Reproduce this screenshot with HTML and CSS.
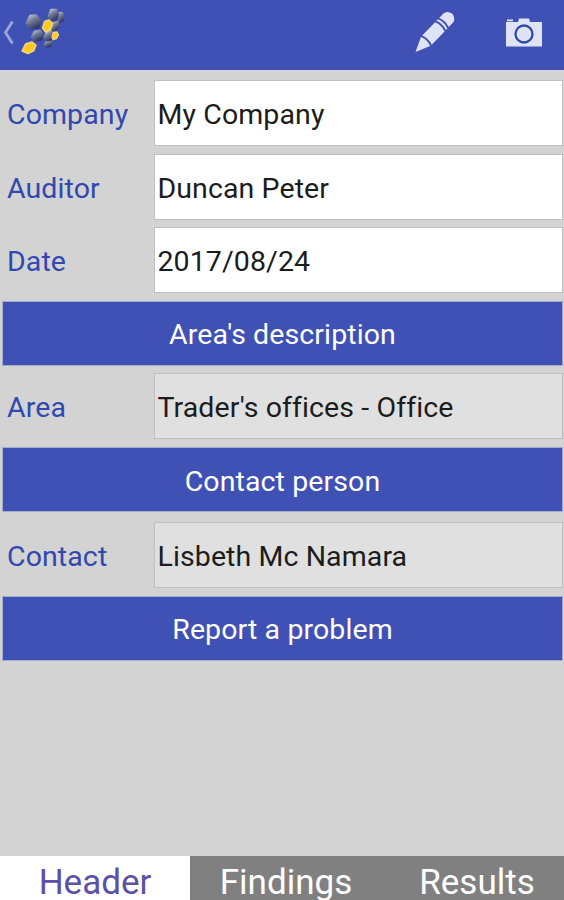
FILE: index.html
```html
<!DOCTYPE html>
<html lang="en">
<head>
  <meta charset="UTF-8">
  <meta name="viewport" content="width=device-width, initial-scale=1.0">
  <title>Audit</title>
  <link rel="stylesheet" href="styles.css">
</head>
<body>
  <div class="app">
    <header class="topbar">
      <svg class="back" width="12" height="28" viewBox="0 0 12 28">
        <path d="M10.5 2.500 L3.500 13.500 L10.5 24.500" fill="none" stroke="#9aa5dc" stroke-width="2.8"/>
      </svg>
      <svg class="logo" width="48" height="52" viewBox="0 0 48 52">
        <defs>
          <linearGradient id="steel" x1="0" y1="0" x2="0.6" y2="1">
            <stop offset="0" stop-color="#d0d4de"/>
            <stop offset="0.45" stop-color="#747c98"/>
            <stop offset="1" stop-color="#2c3566"/>
          </linearGradient>
        </defs>
        <g fill="url(#steel)" stroke="url(#steel)" stroke-width="1.6" stroke-linejoin="round">
          <path d="M38 7 L42 6.500 L44 10 L42.500 15 L39.500 16.500 L37 13 Z"/>
          <path d="M31 3.500 L36.500 3.500 L38.500 8 L36.500 13.500 L31 14.500 L28.500 10 Z"/>
          <path d="M33 17 L38 15.500 L39 20 L36 24 L32 24.500 Z"/>
          <path d="M10 9.500 L16 9 L21 14 L18.500 21.500 L10.500 23 L6.500 17 Z"/>
          <path d="M14.500 25.500 L20 24.500 L23 28 L21.500 33.500 L15 35 L11.500 31 Z"/>
          <path d="M26 36 L31 34 L32.500 36.500 L30 40.500 L26.500 41 L24.500 38.500 Z"/>
          <path d="M26.500 26.500 L31.500 25.500 L33.500 29 L31 34 L26.500 34.500 L24.500 31 Z"/>
        </g>
        <g fill="#ffc825" stroke="#f3d878" stroke-width="1.4" stroke-linejoin="round">
          <path d="M24.500 15.500 L29 14 L32.500 17 L30.500 24 L25.500 26 L22.500 22 Z"/>
          <path d="M33.500 26.500 L37 26 L38.500 29 L36.500 32.500 L33 33.500 L32 31 Z"/>
          <path d="M5.500 38 L12 36 L16 39 L14 44.500 L8 47.500 L2 45 Z"/>
        </g>
      </svg>
      <div class="actions">
        <svg width="44" height="44" viewBox="0 0 44 44">
          <g transform="translate(1.500 42) rotate(-46)">
            <path d="M0 0 L14.500 -6.400 Q17 0 14.500 6.400 Z" fill="#dfe3f7"/>
            <path d="M16.500 -6.600 H35 Q37.500 0 35 6.600 H16.500 Q19 0 16.500 -6.600 Z" fill="#dfe3f7"/>
            <path d="M36.900 -6.600 H39 Q41.500 0 39 6.600 H36.900 Q39.400 0 36.900 -6.600 Z" fill="#dfe3f7"/>
            <path d="M41 -6.600 H47 Q52 -6.200 53 0 Q52 6.200 47 6.600 H41 Q43.500 0 41 -6.600 Z" fill="#dfe3f7"/>
          </g>
        </svg>
        <svg width="38" height="30" viewBox="0 0 38 30">
          <path d="M1 5 H13 L14 1.500 H24 L25 5 H37 V29.500 H1 Z" fill="#dfe3f7"/>
          <rect x="2" y="2.500" width="6" height="1.800" fill="#dfe3f7"/>
          <circle cx="19" cy="17" r="8.500" fill="none" stroke="#2f48a8" stroke-width="2.300"/>
        </svg>
      </div>
    </header>

    <main class="form">
      <div class="row">
        <div class="label">Company</div>
        <div class="field">My Company</div>
      </div>
      <div class="row">
        <div class="label">Auditor</div>
        <div class="field">Duncan Peter</div>
      </div>
      <div class="row">
        <div class="label">Date</div>
        <div class="field">2017/08/24</div>
      </div>
      <button class="section-btn">Area's description</button>
      <div class="row">
        <div class="label">Area</div>
        <div class="field readonly">Trader's offices - Office</div>
      </div>
      <button class="section-btn">Contact person</button>
      <div class="row contact">
        <div class="label">Contact</div>
        <div class="field readonly">Lisbeth Mc Namara</div>
      </div>
      <button class="section-btn">Report a problem</button>
    </main>

    <nav class="tabs">
      <div class="tab active">Header</div>
      <div class="tab">Findings</div>
      <div class="tab last">Results</div>
    </nav>
  </div>
</body>
</html>
```
FILE: styles.css
```css
* {
  box-sizing: border-box;
}

body {
  margin: 0;
  font-family: Roboto, "Liberation Sans", sans-serif;
  background-color: #d3d3d3;
}

.app {
  display: flex;
  flex-direction: column;
  height: 900px;
  overflow: hidden;
}

.topbar {
  display: flex;
  height: 70px;
  padding: 6px 21px 0 2px;
  background-color: #3f51b5;
  flex-shrink: 0;
}

.back {
  margin-top: 13px;
}

.logo {
  margin-left: 6px;
}

.actions {
  display: flex;
  gap: 47px;
  margin-left: auto;
  padding-top: 4px;
}

.actions svg:last-child {
  margin-top: 7px;
}

.form {
  display: flex;
  flex-direction: column;
  flex: 1;
  gap: 7.400px;
  padding: 10.400px 1px 0 2px;
}

.row {
  display: flex;
  align-items: center;
  height: 66px;
  flex-shrink: 0;
}

.row.contact {
  margin-top: 2.500px;
}

.label {
  width: 151.500px;
  padding: 3px 0 0 5px;
  color: #3048b0;
  font-size: 28.500px;
  letter-spacing: 0.1px;
}

.field {
  flex: 1;
  height: 66px;
  padding: 1px 0 0 3px;
  border: 1px solid #c0c0c0;
  background-color: #fff;
  color: #1c1c1c;
  font-size: 28.500px;
  line-height: 66px;
  letter-spacing: 0.1px;
}

.field.readonly {
  background-color: #e0e0e0;
}

.section-btn {
  height: 65.500px;
  padding: 3px 0 0;
  border: 1px solid #a3abcf;
  background-color: #3f51b5;
  color: #fff;
  font-family: inherit;
  font-size: 28.500px;
  letter-spacing: 0.1px;
  flex-shrink: 0;
}

.tabs {
  display: grid;
  grid-template-columns: 190px 192px 1fr;
  height: 44px;
  background-color: #808080;
  flex-shrink: 0;
}

.tab {
  padding-top: 6px;
  color: #fff;
  font-size: 35px;
  line-height: 41px;
  text-align: center;
}

.tab.active {
  background-color: #fff;
  color: #5c50a8;
}

.tab.last {
  padding-left: 8px;
}
```
